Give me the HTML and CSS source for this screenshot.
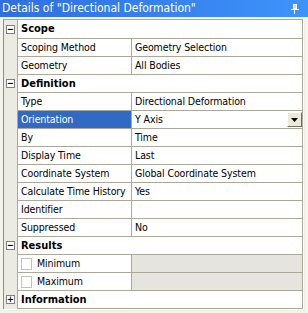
FILE: index.html
```html
<!DOCTYPE html>
<html>
<head>
<meta charset="utf-8">
<link rel="stylesheet" href="styles.css">
</head>
<body>
<div class="panel">
  <div class="title">
    <span class="title-text">Details of "Directional Deformation"</span>
    <svg class="pin" width="8" height="10" viewBox="0 0 8 10">
      <rect x="2" y="0" width="4" height="5" fill="#fff"/>
      <rect x="3" y="1" width="2" height="3" fill="#c8dcff"/>
      <rect x="0" y="5" width="8" height="1" fill="#fff"/>
      <rect x="3" y="6" width="1" height="4" fill="#fff"/>
    </svg>
  </div>
  <div class="grid">
    <div class="row header first"><div class="gutter"><span class="box">−</span></div><div class="hcell">Scope</div></div>
    <div class="row"><div class="gutter"></div><div class="label">Scoping Method</div><div class="value">Geometry Selection</div></div>
    <div class="row"><div class="gutter"></div><div class="label">Geometry</div><div class="value">All Bodies</div></div>
    <div class="row header"><div class="gutter"><span class="box">−</span></div><div class="hcell">Definition</div></div>
    <div class="row"><div class="gutter"></div><div class="label">Type</div><div class="value">Directional Deformation</div></div>
    <div class="row"><div class="gutter"></div><div class="label selected">Orientation</div><div class="value combo"><span>Y Axis</span><span class="drop"><svg width="7" height="4" viewBox="0 0 7 4"><path d="M0 0H7L3.5 4Z" fill="#000"/></svg></span></div></div>
    <div class="row"><div class="gutter"></div><div class="label">By</div><div class="value">Time</div></div>
    <div class="row"><div class="gutter"></div><div class="label">Display Time</div><div class="value">Last</div></div>
    <div class="row"><div class="gutter"></div><div class="label">Coordinate System</div><div class="value">Global Coordinate System</div></div>
    <div class="row"><div class="gutter"></div><div class="label">Calculate Time History</div><div class="value">Yes</div></div>
    <div class="row"><div class="gutter"></div><div class="label">Identifier</div><div class="value"></div></div>
    <div class="row"><div class="gutter"></div><div class="label">Suppressed</div><div class="value">No</div></div>
    <div class="row header"><div class="gutter"><span class="box">−</span></div><div class="hcell">Results</div></div>
    <div class="row"><div class="gutter"></div><div class="label check"><span class="cb"></span>Minimum</div><div class="value disabled"></div></div>
    <div class="row"><div class="gutter"></div><div class="label check"><span class="cb"></span>Maximum</div><div class="value disabled"></div></div>
    <div class="row header"><div class="gutter"><span class="box">+</span></div><div class="hcell">Information</div></div>
  </div>
</div>
</body>
</html>
```
FILE: styles.css
```css
html, body {
  margin: 0;
  padding: 0;
}
body {
  background: #f5f4ec;
  font-family: "DejaVu Sans Condensed", "DejaVu Sans", sans-serif;
  font-stretch: condensed;
  font-size: 10.5px;
  letter-spacing: -0.1px;
  color: #000;
  width: 308px;
  height: 313px;
  overflow: hidden;
}
.panel {
  width: 308px;
}
.title {
  height: 17px;
  background: linear-gradient(to right, #2f6fdf, #3e93fb);
  color: #fff;
  display: flex;
  align-items: center;
  justify-content: space-between;
  padding: 0 9px 0 2px;
  box-sizing: border-box;
}
.title-text {
  font-size: 12px;
  letter-spacing: 0;
  line-height: 17px;
  white-space: nowrap;
}
.pin {
  display: block;
  margin-top: 1px;
}
.grid {
  margin: 2px 0 0 3px;
  width: 300px;
  box-sizing: border-box;
  border-left: 1px solid #8f8d80;
  border-right: 1px solid #aca899;
  border-top: 1px solid #aca899;
  background: #fff;
  box-shadow: 1px 1px 0 #fff, 2px 2px 0 #f0eee2;
}
.row {
  display: grid;
  grid-template-columns: 13px 114px 1fr;
  height: 18px;
}
.row.first {
  height: 19px;
}
.gutter {
  background: #ecebe2;
  position: relative;
}
.box {
  position: absolute;
  left: 2px;
  top: 50%;
  margin-top: -5px;
  width: 9px;
  height: 9px;
  box-sizing: border-box;
  border: 1px solid #808080;
  background: #fff;
  font-family: "DejaVu Sans", sans-serif;
  font-size: 9px;
  letter-spacing: 0;
  line-height: 7px;
  text-align: center;
  font-weight: bold;
}
.hcell {
  grid-column: 2 / 4;
  border-left: 1px solid #aca899;
  border-bottom: 1px solid #aca899;
  font-weight: bold;
  font-size: 11px;
  letter-spacing: 0;
  padding-left: 3px;
  line-height: 17px;
}
.first .hcell {
  line-height: 18px;
}
.label, .value {
  border-bottom: 1px solid #aca899;
  line-height: 17px;
  white-space: nowrap;
  overflow: hidden;
}
.label {
  border-left: 1px solid #aca899;
  padding-left: 3px;
}
.value {
  border-left: 1px solid #aca899;
  padding-left: 3px;
}
.label.selected {
  background: #316ac5;
  color: #fff;
}
.value.disabled {
  background: #e6e4df;
}
.combo {
  display: flex;
  justify-content: space-between;
  align-items: center;
}
.drop {
  width: 15px;
  height: 15px;
  box-sizing: border-box;
  background: #ece9d8;
  border-top: 1px solid #fff;
  border-left: 1px solid #fff;
  border-right: 1px solid #716f64;
  border-bottom: 1px solid #716f64;
  display: flex;
  align-items: center;
  justify-content: center;
}
.drop svg {
  display: block;
}
.check {
  display: flex;
  align-items: center;
}
.cb {
  width: 11px;
  height: 12px;
  box-sizing: border-box;
  border: 1px solid #c5c2b2;
  background: #fff;
  margin-right: 5px;
}
```
